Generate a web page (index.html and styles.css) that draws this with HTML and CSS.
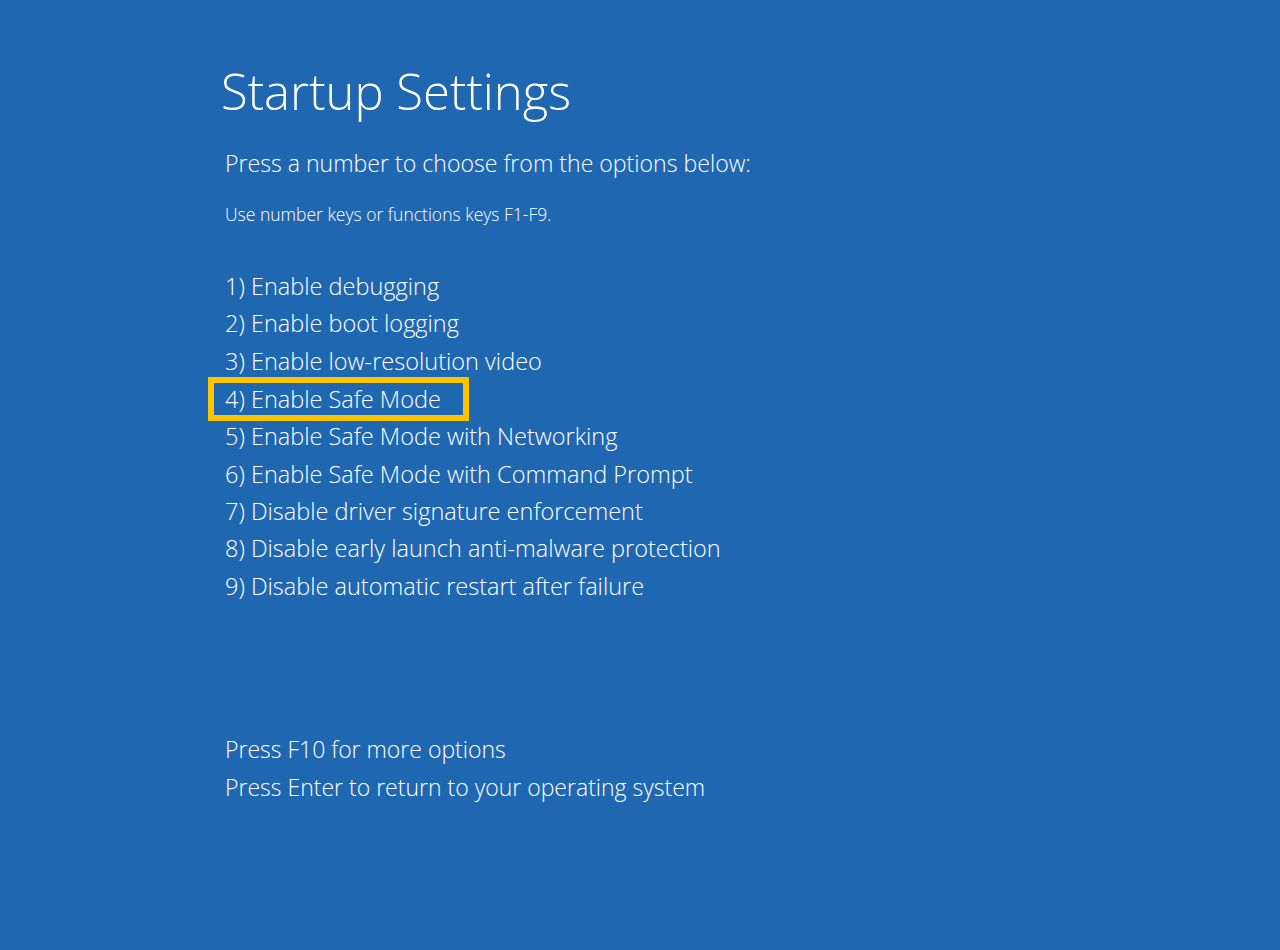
FILE: index.html
```html
<!DOCTYPE html>
<html lang="en">
<head>
    <meta charset="UTF-8">
    <title>Startup Settings</title>
    <link rel="stylesheet" href="styles.css">
</head>
<body>
    <div class="screen">
        <h1>Startup Settings</h1>
        <p class="prompt">Press a number to choose from the options below:</p>
        <p class="hint">Use number keys or functions keys F1-F9.</p>

        <!-- Boot options -->
        <ul class="options">
            <li>1) Enable debugging</li>
            <li>2) Enable boot logging</li>
            <li>3) Enable low-resolution video</li>
            <li class="selected">4) Enable Safe Mode</li>
            <li>5) Enable Safe Mode with Networking</li>
            <li>6) Enable Safe Mode with Command Prompt</li>
            <li>7) Disable driver signature enforcement</li>
            <li>8) Disable early launch anti-malware protection</li>
            <li>9) Disable automatic restart after failure</li>
        </ul>

        <div class="footer">
            <p>Press F10 for more options</p>
            <p>Press Enter to return to your operating system</p>
        </div>
    </div>
</body>
</html>
```

FILE: styles.css
```css
body {
    margin: 0;
    background: #2067b2;
    color: #fff;
    font-family: "Open Sans", "Noto Sans", sans-serif;
    font-weight: 350;
    height: 950px;
    overflow: hidden;
}

.screen {
    padding: 56px 0 0 225px;
}

h1 {
    margin: 0 0 0 -4px;
    font-size: 49px;
    font-weight: 300;
    line-height: 70px;
}

.prompt {
    margin: 22px 0 0;
    font-size: 23.1px;
    line-height: 30px;
}

.hint {
    margin: 26px 0 0;
    font-size: 17.5px;
    line-height: 20px;
}

/* Option list */
.options {
    list-style: none;
    margin: 44px 0 0;
    padding: 0;
}

.options li {
    font-size: 23.5px;
    line-height: 37.4px;
}

.options li.selected {
    width: fit-content;
    margin: -3px 0 -3px -17px;
    padding: 0 22px 0 11px;
    line-height: 32px;
    border: 6px solid #fbc400;
}

.footer {
    margin-top: 125px;
}

.footer p {
    margin: 0;
    font-size: 23px;
    line-height: 38px;
}
```
